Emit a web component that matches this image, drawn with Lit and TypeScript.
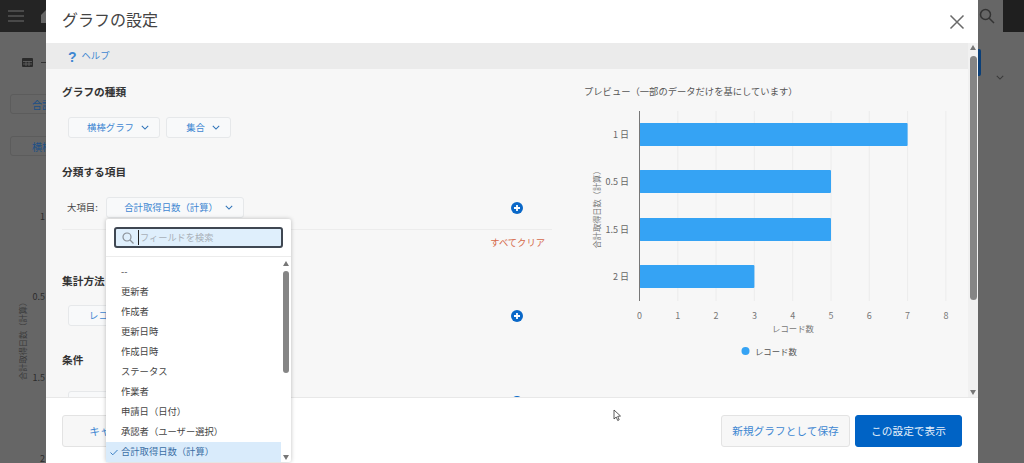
import { LitElement, html, css, svg } from "lit";
import { customElement } from "lit/decorators.js";

const L = "\uFF08";
const R = "\uFF09";
const FIELD = `合計取得日数${L}計算${R}`;
const BARS = [
  { label: "1 日", v: 7, y: 123 },
  { label: "0.5 日", v: 5, y: 170 },
  { label: "1.5 日", v: 5, y: 218 },
  { label: "2 日", v: 3, y: 265 },
];
const X0 = 639.5;
const STEP = 38.3;
const ITEMS = ["--", "更新者", "作成者", "更新日時", "作成日時", "ステータス", "作業者", `申請日${L}日付${R}`, `承認者${L}ユーザー選択${R}`];

const chevron = html`<svg class="chev" viewBox="0 0 10 6" width="8" height="5"><path d="M1 1l4 4 4-4" fill="none" stroke="currentColor" stroke-width="1.3"/></svg>`;
const plus = html`<svg class="plus" viewBox="0 0 12 12" width="12" height="12"><circle cx="6" cy="6" r="6" fill="#0a68c8"/><path d="M6 3v6M3 6h6" stroke="#fff" stroke-width="1.8"/></svg>`;

@customElement("app-root")
export class AppRoot extends LitElement {
  static styles = css`
    :host { display: block; width: 1024px; height: 463px; position: relative; overflow: hidden; background: #666; font-family: "Noto Sans CJK JP", "Liberation Sans", sans-serif; color: #3c3c3c; }
    .top { height: 32px; display: flex; align-items: center; background: #666; }
    .top-left { width: 46px; height: 32px; background: #242424; display: flex; align-items: center; padding-left: 8px; box-sizing: border-box; gap: 17px; flex: none; }
    .top-mid { flex: 1; }
    .search { margin-right: 8px; }
    .top-right { width: 21px; height: 32px; background: #1f1f1f; }
    .bg { display: flex; height: 431px; }
    .bg-left { width: 46px; flex: none; position: relative; }
    .tbl { position: absolute; left: 22px; top: 26px; }
    .dash { position: absolute; left: 41px; top: 30px; width: 5px; height: 1px; background: #333; }
    .chip { position: absolute; left: 10px; width: 60px; height: 20px; box-sizing: border-box; border: 1px solid #5c5c5c; border-radius: 3px; font-size: 10px; line-height: 19px; padding-left: 21px; color: #1b4f86; white-space: nowrap; }
    .chip.a { top: 62px; }
    .chip.b { top: 104px; padding-left: 21px; }
    .bg-svg { position: absolute; left: 0; top: 0; }
    .bg-right { flex: 1; position: relative; }
    .navy { position: absolute; left: 932px; top: 17px; width: 3px; height: 27px; background: #0a3f78; border-radius: 0 2px 2px 0; }
    .bgchev { position: absolute; left: 950px; top: 29px; }
    .bgchev .chev { color: #3a3a3a; }

    .modal { position: absolute; left: 46px; top: 0; width: 932px; height: 463px; background: #fff; display: flex; flex-direction: column; }
    .head { height: 43px; flex: none; display: flex; align-items: center; justify-content: space-between; padding: 0 13px 0 16px; box-sizing: border-box; }
    .title { font-size: 16px; color: #444; margin-bottom: 5px; }
    .mid { position: relative; height: 355px; flex: none; overflow: hidden; background: #f7f7f7; border-bottom: 1px solid #e8e8e8; box-sizing: border-box; }
    .help { height: 26px; box-sizing: border-box; background: #ebebeb; display: flex; align-items: center; padding: 0 0 3px 22px; gap: 5px; font-size: 9.3px; color: #3f87d2; margin-right: 10px; }
    .q { font-family: "Liberation Sans", sans-serif; font-size: 14px; font-weight: 700; color: #3f87d2; line-height: 1; margin-top: 4px; }
    .cols { display: flex; height: 329px; margin-right: 10px; }
    .left { width: 490px; margin-left: 16px; flex: none; padding-top: 15px; box-sizing: border-box; }
    .right { flex: 1; position: relative; }
    h3 { margin: 0; font-size: 10.7px; line-height: 16px; font-weight: 700; color: #333; }
    .sel { display: inline-flex; align-items: center; justify-content: flex-end; height: 21px; box-sizing: border-box; border: 1px solid #e6e8ea; border-radius: 3px; background: #f8f9fa; color: #3f87d2; font-size: 9.4px; gap: 7px; padding-right: 10px; white-space: nowrap; }
    .sel span { margin-top: -2px; }
    .chev { color: #2d72b8; flex: none; }
    .btns { display: flex; gap: 6px; margin: 17px 0 26px 6px; }
    .s1 { width: 92px; }
    .s2 { width: 65px; }
    .row { display: flex; align-items: center; justify-content: space-between; padding-right: 29px; }
    .row-l { display: flex; align-items: center; }
    .lab { width: 44px; padding-left: 5px; box-sizing: border-box; font-size: 9.4px; color: #444; white-space: nowrap; margin-top: -1px; }
    .s3 { width: 138px; }
    .mt17 { margin-top: 17px; }
    .rule { height: 1px; background: #ececec; margin-top: 11px; }
    .clear { margin-top: 5px; text-align: right; padding-right: 7px; font-size: 9.3px; line-height: 14px; color: #d5694a; }
    .h2 { margin-top: 24px; }
    .mt16 { margin-top: 16px; margin-left: 6px; }
    .s4 { width: 120px; justify-content: flex-start; padding-left: 20px; }
    .h3 { margin-top: 26px; }
    .mt23 { margin-top: 23px; margin-left: 6px; }
    .scroll { position: absolute; right: 0; top: 0; bottom: 0; width: 10px; background: #f1f1f1; display: flex; flex-direction: column; align-items: center; }
    .up, .down { width: 0; height: 0; border-left: 3.5px solid transparent; border-right: 3.5px solid transparent; flex: none; }
    .up { border-bottom: 5px solid #777; margin-top: 2px; }
    .down { border-top: 5px solid #777; margin-top: auto; margin-bottom: 2px; }
    .mthumb { width: 7px; height: 244px; background: #858585; border-radius: 4px; margin-top: 6px; }
    .foot { flex: 1; display: flex; align-items: center; padding: 0 16px; gap: 5px; }
    .btn { height: 32px; box-sizing: border-box; border: 1px solid #e3e3e3; border-radius: 3px; background: #f7f7f7; color: #3f87d2; font-size: 10.7px; display: flex; align-items: center; justify-content: center; white-space: nowrap; }
    .cancel { width: 108px; margin-right: auto; background: #f7f7f7; }
    .save { width: 129px; }
    .primary { width: 107px; background: #0063c5; border-color: #0063c5; color: #e6f0fa; }

    .menu { position: absolute; left: 60px; top: 219px; width: 185px; height: 243px; background: #fff; box-shadow: 0 0 4px rgba(0,0,0,.25); border-radius: 2px; }
    .box { padding: 8px 8px 0; height: 38px; box-sizing: border-box; border-bottom: 1px solid #ececec; }
    .input { height: 21px; box-sizing: border-box; border: 2px solid #3f4752; border-radius: 3px; background: #dfeffc; display: flex; align-items: center; padding-left: 6px; gap: 4px; font-size: 9.2px; color: #a8b0b8; }
    .ph { margin-top: -2px; }
    .caret { width: 1px; height: 15px; background: #222; margin-right: -3px; }
    .list-wrap { display: flex; height: 205px; }
    .list { list-style: none; margin: 5px 0 0; padding: 0; width: 175px; flex: none; align-self: flex-start; }
    .list li { height: 20px; line-height: 19px; font-size: 9.3px; padding-left: 15px; color: #444; white-space: nowrap; position: relative; }
    .list li.on { background: #d9ebfb; color: #3a6ea5; }
    .tick { position: absolute; left: 4px; top: 7px; }
    .mscroll { width: 10px; display: flex; flex-direction: column; align-items: center; height: 205px; }
    .mthumb2 { width: 6px; height: 102px; background: #858585; border-radius: 3px; margin-top: 5px; }
    .mscroll .up { margin-top: 4px; }
    .cursor { position: absolute; left: 613px; top: 409px; }
    text { font-family: "Noto Sans CJK JP", "Liberation Sans", sans-serif; }
  `;

  private chart() {
    const ticks = [0, 1, 2, 3, 4, 5, 6, 7, 8];
    return svg`
      <g transform="translate(-552 -69)">
        <text x="584" y="94.5" font-size="9.3" fill="#555">${`プレビュー${L}一部のデータだけを基にしています${R}`}</text>
        ${ticks.slice(1).map((t) => svg`<line x1=${X0 + t * STEP} x2=${X0 + t * STEP} y1="111" y2="301" stroke="#ececec"/>`)}
        ${BARS.map((b) => svg`
          <rect x=${X0} y=${b.y} width=${b.v * STEP} height="23" fill="#35a3f4" rx="1"/>
          <text x="629" y=${b.y + 15} font-size="9" fill="#666" text-anchor="end">${b.label}</text>`)}
        <line x1=${X0} x2=${X0} y1="111" y2="301" stroke="#777"/>
        ${ticks.map((t) => svg`<text x=${X0 + t * STEP} y="319" font-size="9" fill="#777" text-anchor="middle">${t}</text>`)}
        <text x="793" y="332" font-size="8.4" fill="#777" text-anchor="middle">レコード数</text>
        <text transform="translate(600 207.5) rotate(-90)" font-size="8.2" fill="#777" text-anchor="middle">${FIELD}</text>
        <circle cx="745.5" cy="351" r="4" fill="#35a3f4"/>
        <text x="755" y="354.5" font-size="8.4" fill="#555">レコード数</text>
      </g>`;
  }

  render() {
    return html`
      <div class="top">
        <div class="top-left">
          <svg width="16" height="12" viewBox="0 0 16 12"><path d="M0 1h16M0 6h16M0 11h16" stroke="#555" stroke-width="1.4"/></svg>
          <svg width="5" height="14" viewBox="0 0 5 14"><path d="M0 14V6l5-5v13z" fill="#666"/></svg>
        </div>
        <div class="top-mid"></div>
        <svg class="search" width="16" height="16" viewBox="0 0 16 16"><circle cx="6.5" cy="6.5" r="5" fill="none" stroke="#333" stroke-width="1.5"/><path d="M10 10l5 5" stroke="#333" stroke-width="1.5"/></svg>
        <div class="top-right"></div>
      </div>
      <div class="bg">
        <div class="bg-left">
          <svg class="tbl" width="11" height="9" viewBox="0 0 11 9"><rect width="11" height="9" rx="1" fill="#2a2a2a"/><path d="M1 3.5h9M1 6h9M4 3v5M7 3v5" stroke="#666" stroke-width=".8"/></svg>
          <div class="dash"></div>
          <div class="chip a">合計</div>
          <div class="chip b">横棒</div>
          <svg class="bg-svg" width="46" height="431" viewBox="0 32 46 431">
            <text x="45" y="220" font-size="9" fill="#2c2c2c" text-anchor="end">1</text>
            <text x="45" y="300" font-size="9" fill="#2c2c2c" text-anchor="end">0.5</text>
            <text x="45" y="381" font-size="9" fill="#2c2c2c" text-anchor="end">1.5</text>
            <text x="45" y="462" font-size="9" fill="#2c2c2c" text-anchor="end">2</text>
            <text transform="translate(26 339) rotate(-90)" font-size="8.2" fill="#3a3a3a" text-anchor="middle">${FIELD}</text>
          </svg>
        </div>
        <div class="bg-right">
          <div class="navy"></div>
          <div class="bgchev">${chevron}</div>
        </div>
      </div>

      <div class="modal">
        <div class="head">
          <div class="title">グラフの設定</div>
          <svg width="16" height="16" viewBox="0 0 16 16"><path d="M1.5 1.5l13 13M14.5 1.5l-13 13" stroke="#6a6a6a" stroke-width="1.5"/></svg>
        </div>
        <div class="mid">
          <div class="help"><span class="q">?</span><span>ヘルプ</span></div>
          <div class="cols">
            <div class="left">
              <h3>グラフの種類</h3>
              <div class="btns">
                <div class="sel s1"><span>横棒グラフ</span> ${chevron}</div>
                <div class="sel s2"><span>集合</span> ${chevron}</div>
              </div>
              <h3>分類する項目</h3>
              <div class="row mt17">
                <div class="row-l"><span class="lab">大項目:</span><div class="sel s3"><span>${FIELD}</span> ${chevron}</div></div>
                ${plus}
              </div>
              <div class="rule"></div>
              <div class="clear">すべてクリア</div>
              <h3 class="h2">集計方法</h3>
              <div class="row mt16"><div class="sel s4"><span>レコード数</span></div>${plus}</div>
              <h3 class="h3">条件</h3>
              <div class="row mt23"><div class="sel s4"><span>すべてのレコード</span></div>${plus}</div>
            </div>
            <div class="right">
              <svg width="416" height="329" viewBox="0 0 416 329">${this.chart()}</svg>
            </div>
          </div>
          <div class="scroll"><div class="up"></div><div class="mthumb"></div><div class="down"></div></div>
        </div>
        <div class="foot">
          <div class="btn cancel">キャンセル</div>
          <div class="btn save">新規グラフとして保存</div>
          <div class="btn primary">この設定で表示</div>
        </div>
        <div class="menu">
          <div class="box">
            <div class="input">
              <svg width="12" height="12" viewBox="0 0 12 12"><circle cx="5" cy="5" r="4" fill="none" stroke="#8a9097" stroke-width="1.2"/><path d="M8 8l3.5 3.5" stroke="#8a9097" stroke-width="1.2"/></svg>
              <span class="caret"></span><span class="ph">フィールドを検索</span>
            </div>
          </div>
          <div class="list-wrap">
            <ul class="list">
              ${ITEMS.map((i) => html`<li>${i}</li>`)}
              <li class="on"><svg class="tick" width="8" height="7" viewBox="0 0 8 7"><path d="M.5 3.5l2.3 2.3L7.5 1" fill="none" stroke="#3a7fc4" stroke-width="1"/></svg>${FIELD}</li>
            </ul>
            <div class="mscroll"><div class="up"></div><div class="mthumb2"></div><div class="down"></div></div>
          </div>
        </div>
      </div>
      <svg class="cursor" width="9" height="13" viewBox="0 0 9 13"><path d="M1 1v9l2.2-2 1.5 3.5 1.5-.7L4.7 7.4 7.5 7z" fill="#fff" stroke="#333" stroke-width=".8"/></svg>
    `;
  }
}
